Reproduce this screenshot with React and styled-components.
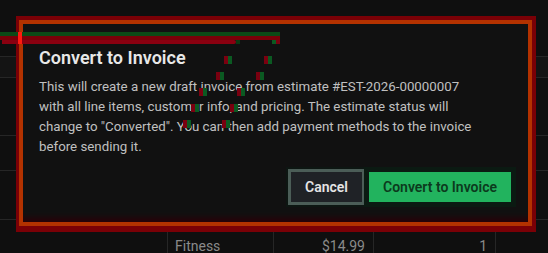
import React from "react";
import styled, { createGlobalStyle } from "styled-components";

const GlobalStyle = createGlobalStyle`
  html, body {
    margin: 0;
    padding: 0;
    background: #0f0f0f;
    font-family: Roboto, "Liberation Sans", Arial, sans-serif;
    overflow: hidden;
  }
`;

const Page = styled.div`
  position: relative;
  width: 548px;
  height: 253px;
  background: #0f0f0f;
  overflow: hidden;
`;

const Table = styled.div`
  display: flex;
  flex-direction: column;
`;

const Row = styled.div`
  height: ${({ $h }) => $h}px;
  flex-shrink: 0;
  border-bottom: 1px solid #262626;
  background: ${({ $head }) => ($head ? "#141414" : "transparent")};
  display: flex;
  box-sizing: border-box;
`;

const Cell = styled.div`
  width: ${({ $w }) => $w}px;
  box-sizing: border-box;
  border-left: ${({ $line }) => ($line ? "1px solid #262626" : "none")};
  padding: 0 8px 0 7px;
  display: flex;
  align-items: center;
  justify-content: ${({ $right }) => ($right ? "flex-end" : "flex-start")};
  font-size: 14px;
  line-height: 20px;
  color: #8a8a8a;
`;

const Dialog = styled.div`
  position: absolute;
  left: 16px;
  top: 16px;
  width: 520px;
  height: 216px;
  box-sizing: border-box;
  background: #111111;
  border: 4px solid #7a0006;
  border-bottom-width: 6px;
  border-left-width: 3px;
  box-shadow: inset 0 0 0 4px #b33200, inset 0 -12px 6px -4px #2a0008;
  padding: 24px 21px 24px 20px;
  display: flex;
  flex-direction: column;
`;

const Title = styled.h2`
  margin: 0 0 5px;
  font-size: 18px;
  line-height: 28px;
  font-weight: 600;
  color: #e8e8e8;
`;

const Body = styled.p`
  margin: 0;
  max-width: 444px;
  font-size: 13.3px;
  line-height: 20px;
  color: #c0c0c0;
`;

const Actions = styled.div`
  margin-top: 15px;
  display: flex;
  justify-content: flex-end;
  gap: 7px;
`;

const Button = styled.button`
  height: 30px;
  box-sizing: border-box;
  border: none;
  padding: 0 14px;
  font-family: inherit;
  font-size: 14px;
  font-weight: 600;
  border-radius: 0;
  cursor: pointer;
  background: ${({ $primary }) => ($primary ? "#22b35e" : "#1f2226")};
  color: ${({ $primary }) => ($primary ? "#0c3a1d" : "#e4e4e4")};
  box-shadow: ${({ $primary }) =>
    $primary
      ? "0 0 0 5px #0b1a12"
      : "0 0 0 3px #4b5d57, 0 0 0 5px #0d1612"};
`;

const Streak = styled.div`
  position: absolute;
  pointer-events: none;
  background: ${({ $c }) => $c};
  border-radius: ${({ $round }) => ($round ? "0 3px 3px 0" : "0")};
`;

const Mark = styled.div`
  position: absolute;
  width: 8px;
  height: 8px;
  pointer-events: none;
  background: linear-gradient(to right, #7a0010 0 50%, #0b5a22 50% 100%);
`;

const streaks = [
  { x: 0, y: 32, w: 280, h: 4, c: "#0b4a16" },
  { x: 0, y: 36, w: 280, h: 4, c: "#7a0008" },
  { x: 2, y: 40, w: 234, h: 4, c: "#8a0010", round: true },
  { x: 236, y: 40, w: 4, h: 4, c: "#0b3a14" },
  { x: 272, y: 40, w: 4, h: 4, c: "#0b5a22" },
  { x: 276, y: 40, w: 4, h: 4, c: "#7a0010" },
  { x: 18, y: 32, w: 4, h: 12, c: "#ff1a10" },
];

const marks = [
  [224, 56], [264, 56],
  [216, 72], [256, 72],
  [199, 88], [237, 88],
  [191, 104], [230, 104],
  [183, 120], [222, 120],
];

export default function App() {
  return (
    <Page>
      <GlobalStyle />
      <Table>
        <Row $h={57} />
        <Row $h={21} $head />
        <Row $h={58} />
        <Row $h={35} />
        <Row $h={49} />
        <Row $h={52}>
          <Cell $w={167} />
          <Cell $w={106} $line>Fitness</Cell>
          <Cell $w={100} $line $right>$14.99</Cell>
          <Cell $w={122} $line $right>1</Cell>
          <Cell $w={53} $line />
        </Row>
      </Table>

      <Dialog role="dialog">
        <Title>Convert to Invoice</Title>
        <Body>
          This will create a new draft invoice from estimate #EST-2026-00000007
          with all line items, customer info, and pricing. The estimate status
          will change to "Converted". You can then add payment methods to the
          invoice before sending it.
        </Body>
        <Actions>
          <Button>Cancel</Button>
          <Button $primary>Convert to Invoice</Button>
        </Actions>
      </Dialog>

      {streaks.map((s, i) => (
        <Streak
          key={i}
          $c={s.c}
          $round={s.round}
          style={{ left: s.x, top: s.y, width: s.w, height: s.h }}
        />
      ))}
      {marks.map(([x, y], i) => (
        <Mark key={i} style={{ left: x, top: y }} />
      ))}
    </Page>
  );
}
